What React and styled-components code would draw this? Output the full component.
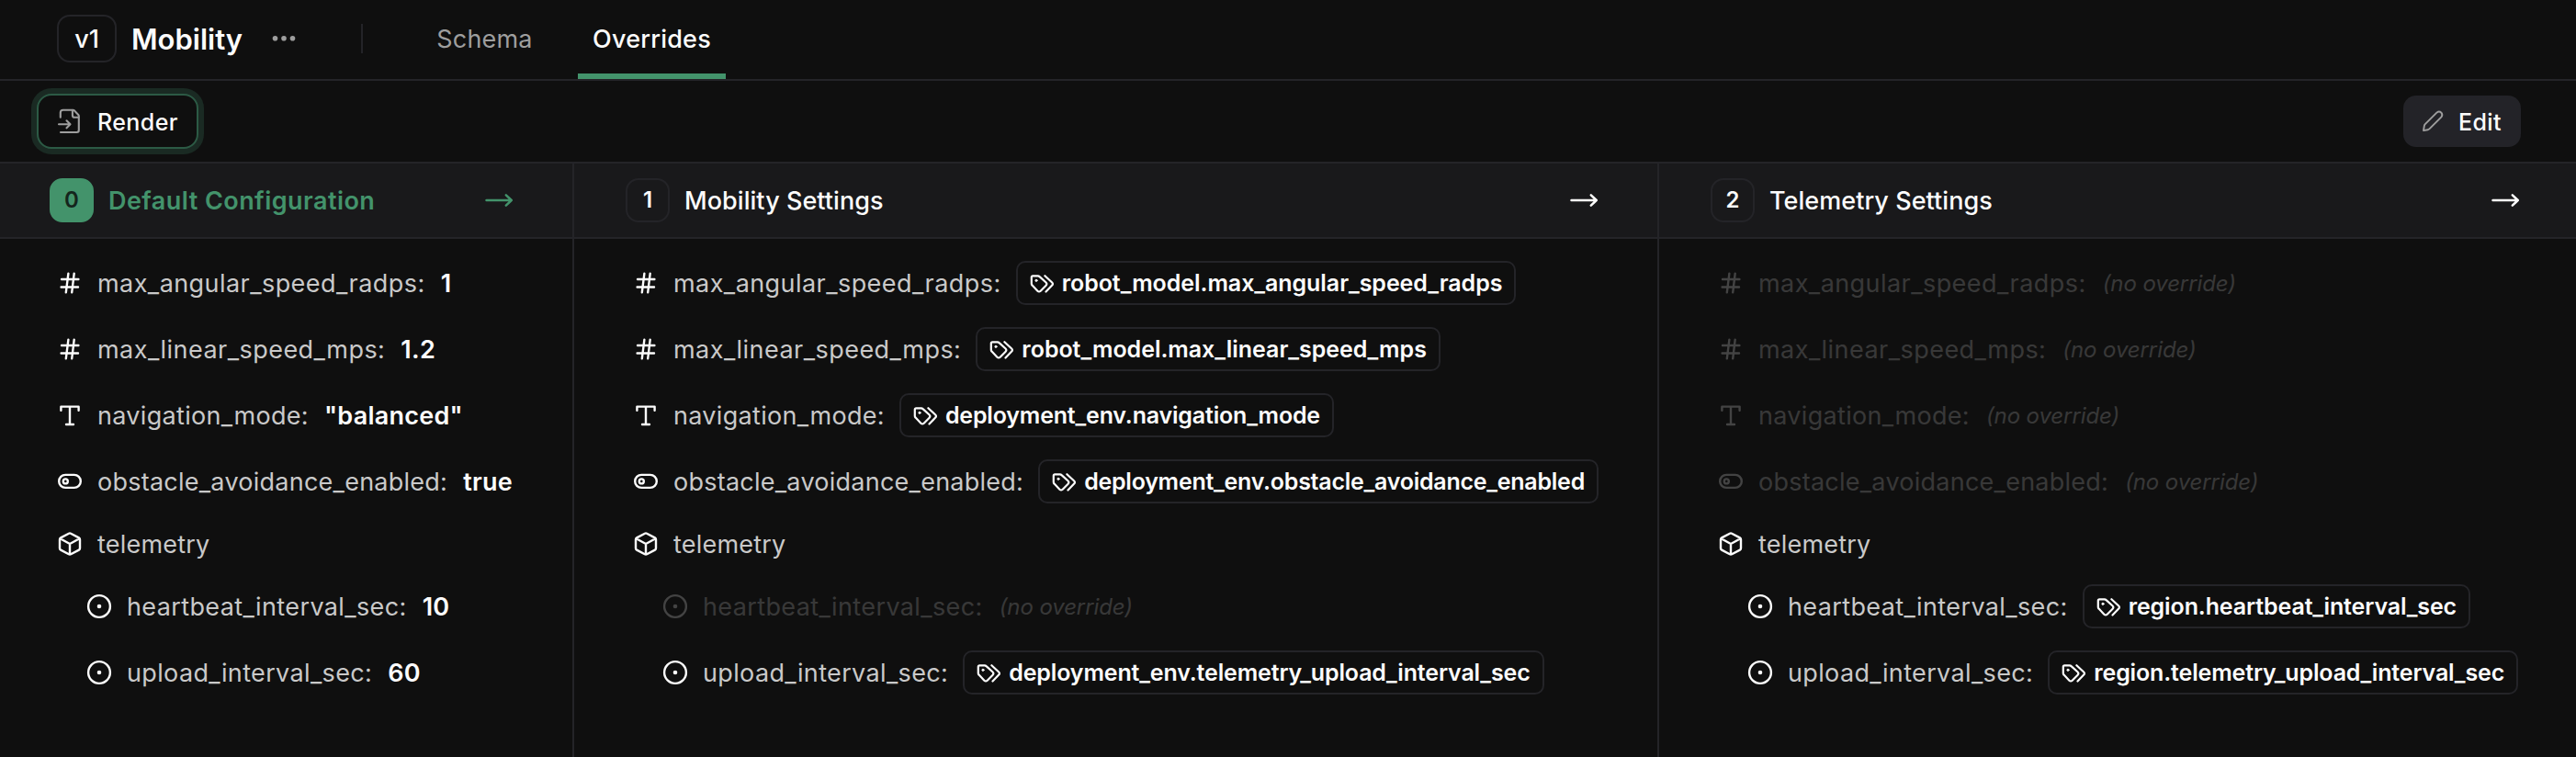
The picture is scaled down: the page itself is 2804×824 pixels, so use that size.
import React from "react";
import styled, { createGlobalStyle, css } from "styled-components";

const color = {
  bg: "#0f0f0f",
  band: "#19191b",
  line: "#242428",
  raised: "#232328",
  green: "#43936b",
  greenLine: "#2c5a45",
  greenHalo: "#1a2a23",
  text: "#fcfcfc",
  key: "#c9c9c9",
  muted: "#9e9e9e",
};

const GlobalStyle = createGlobalStyle`
  * { box-sizing: border-box; }
  body {
    margin: 0;
    background: ${color.bg};
    color: ${color.text};
    font-family: Inter, "Liberation Sans", sans-serif;
    font-size: 27px;
    line-height: 1;
    -webkit-font-smoothing: antialiased;
  }
`;

const Page = styled.div`
  display: flex;
  flex-direction: column;
  height: 824px;
  overflow: hidden;
`;

const Header = styled.header`
  display: flex;
  align-items: center;
  height: 88px;
  padding-left: 62px;
  border-bottom: 2px solid ${color.line};
`;

const VersionBadge = styled.span`
  display: flex;
  align-items: center;
  justify-content: center;
  width: 65px;
  height: 52px;
  margin-top: -2px;
  border: 2px solid ${color.line};
  border-radius: 14px;
  font-weight: 500;
`;

const Title = styled.h1`
  width: 123px;
  margin: -1px 0 0 16px;
  font-size: 31px;
  font-weight: 600;
  letter-spacing: 0;
  white-space: nowrap;
`;

const MenuButton = styled.span`
  display: flex;
  margin-left: 30px;
`;

const Divider = styled.span`
  width: 2px;
  height: 32px;
  margin: -2px 0 0 71px;
  background: ${color.line};
`;

const Tabs = styled.nav`
  display: flex;
  align-self: stretch;
  gap: 32px;
  margin-left: 63px;
`;

const Tab = styled.span`
  display: flex;
  align-items: center;
  justify-content: center;
  width: ${(p) => (p.$active ? "161px" : "139px")};
  padding-top: 5px;
  border-bottom: 6px solid ${(p) => (p.$active ? color.green : "transparent")};
  color: ${(p) => (p.$active ? color.text : color.muted)};
  font-weight: ${(p) => (p.$active ? 500 : 400)};
  letter-spacing: 0.2px;
`;

const Toolbar = styled.div`
  display: flex;
  align-items: center;
  justify-content: space-between;
  height: 90px;
  padding: 0 60px 0 40px;
  border-bottom: 2px solid ${color.line};
`;

const Button = styled.button`
  display: flex;
  align-items: center;
  margin: 0;
  border: 0;
  color: ${color.text};
  font: 500 25px Inter, "Liberation Sans", sans-serif;
  letter-spacing: 0.4px;
  ${(p) =>
    p.$outlined
      ? css`
          gap: 14px;
          width: 176px;
          height: 60px;
          padding: 0 0 0 18px;
          border: 2px solid ${color.greenLine};
          border-radius: 16px;
          background: ${color.bg};
          box-shadow: 0 0 0 6px ${color.greenHalo};
        `
      : css`
          gap: 12px;
          width: 128px;
          height: 56px;
          padding: 0 0 0 16px;
          border-radius: 14px;
          background: ${color.raised};
        `}
`;

const ButtonLabel = styled.span`
  padding-top: 2px;
`;

const Columns = styled.main`
  display: grid;
  grid-template-columns: 625px 1181px 1fr;
  flex: 1;
`;

const Column = styled.section`
  --start: ${(p) => (p.$first ? "54px" : "56px")};
  border-right: ${(p) => (p.$last ? "0" : `2px solid ${color.line}`)};
`;

const ColumnHeader = styled.header`
  display: flex;
  align-items: center;
  height: 82px;
  padding: 0 ${(p) => (p.$last ? "60px" : "63px")} 0 var(--start);
  border-bottom: 2px solid ${color.line};
  background: ${color.band};
  color: ${(p) => (p.$first ? color.green : color.text)};
`;

const Index = styled.span`
  display: flex;
  align-items: center;
  justify-content: center;
  width: 48px;
  height: 48px;
  border: 2px solid ${(p) => (p.$first ? color.green : color.line)};
  border-radius: 14px;
  background: ${(p) => (p.$first ? color.green : "transparent")};
  color: ${(p) => (p.$first ? "#14251c" : color.text)};
  font-size: 24px;
  font-weight: 600;
`;

const ColumnTitle = styled.h2`
  flex: 1;
  margin: 0 0 0 15px;
  padding: 1px 0 0 1px;
  font-size: 27px;
  font-weight: ${(p) => (p.$first ? 600 : 500)};
  letter-spacing: ${(p) => (p.$first ? "0.45px" : "0.05px")};
`;

const Rows = styled.div`
  display: flex;
  flex-direction: column;
  gap: 24px;
  padding: 24px 0 0 calc(var(--start) + 6px);
`;

const Row = styled.div`
  display: flex;
  align-items: center;
  height: ${(p) => (p.$group ? "40px" : "48px")};
  padding-left: ${(p) => (p.$nested ? "32px" : "0")};
  opacity: ${(p) => (p.$faded ? 0.22 : 1)};
  white-space: nowrap;
`;

const Key = styled.span`
  margin-left: 14px;
  padding-top: 1px;
  color: ${color.key};
  letter-spacing: ${(p) => p.$tracking}px;
`;

const Value = styled.span`
  margin-left: 17px;
  padding-top: 1px;
  font-weight: 600;
  letter-spacing: 0.25px;
`;

const Missing = styled.em`
  margin-left: 18px;
  padding-top: 1px;
  color: ${color.key};
  font-size: 24px;
  letter-spacing: -0.1px;
`;

const Chip = styled.span`
  display: flex;
  align-items: center;
  height: 48px;
  margin-left: 16px;
  padding: 1px 13px 0 12px;
  border: 2px solid ${color.line};
  border-radius: 10px;
  font-size: 25px;
  font-weight: 600;
  letter-spacing: ${(p) => p.$tracking}px;
  svg { margin-right: 8px; }
`;

const Glyph = styled.svg`
  flex: none;
  display: block;
  width: ${(p) => p.$size || 32}px;
  height: ${(p) => p.$size || 32}px;
  fill: none;
  stroke: ${(p) => p.$tone || "currentColor"};
  stroke-width: ${(p) => p.$weight || 2.4};
  stroke-linecap: round;
  stroke-linejoin: round;
`;

const Dots = () => (
  <svg width="26" height="8" viewBox="0 0 26 8" fill={color.muted}>
    <circle cx="3.5" cy="2.8" r="2.8" />
    <circle cx="13" cy="2.8" r="2.8" />
    <circle cx="22.5" cy="2.8" r="2.8" />
  </svg>
);

const FileInput = () => (
  <Glyph viewBox="0 0 32 32" $tone={color.muted} $weight={2.1}>
    <path d="M5.8 11.7V6.6q0-2.8 2.8-2.8H19.6q.7 0 1.2.5L25.3 8.9q.5.5.5 1.2V25.8q0 2.2-2.2 2.2H6" />
    <path d="M18.9 4.2V9.5q0 2.3 2.3 2.3h4.3M4 19.3h12.3M12.5 15.3l4 4-4 4" />
  </Glyph>
);

const Pencil = () => (
  <Glyph viewBox="0 0 32 32" $tone={color.muted} $weight={1.9}>
    <path d="M6 26.1l.8-5q.2-1.1 1-1.9L20.6 6.4q2.5-1.8 4.8.3 1.9 2.3 0 4.7L12.6 24.2q-.8.8-1.9 1z" />
  </Glyph>
);

const Arrow = () => (
  <Glyph viewBox="0 0 32 32" $weight={2.5}>
    <path d="M1.5 16H28.8M22.8 10.4l6 5.6-6 5.6" />
  </Glyph>
);

const Tags = () => (
  <Glyph viewBox="0 0 28 28" $size={28} $weight={2.2}>
    <path d="M2.8 6.8q0-1.5 1.5-1.5h5.5q1 0 1.8.8l7 6.4q1.6 1.6 0 3.2l-5.9 6q-1.7 1.5-3.3 0L3.6 15.6q-.8-.8-.8-1.9z" />
    <path d="M17.4 5.2l7.8 7.3q1.5 1.5 0 3.1l-6.7 6.9" />
    <circle cx="8" cy="10.3" r="1.1" fill="currentColor" strokeWidth="1" />
  </Glyph>
);

const glyphs = {
  number: (
    <Glyph viewBox="0 0 32 32">
      <path d="M7 12H25.4M6.6 20.5H25M14.4 5.6l-2.6 20.8M20.7 5.6l-2.5 20.8" />
    </Glyph>
  ),
  string: (
    <Glyph viewBox="0 0 32 32">
      <path d="M6.4 10.7V6.6H25.6V10.7M16 6.6V25.8M12 26H20" />
    </Glyph>
  ),
  boolean: (
    <Glyph viewBox="0 0 32 32">
      <rect x="4.2" y="8.9" width="23.6" height="14" rx="7" />
      <circle cx="11.3" cy="15.9" r="2.5" />
    </Glyph>
  ),
  object: (
    <Glyph viewBox="0 0 32 32">
      <path d="M14.9 4.7q1.1-.6 2.2 0l8.8 4.7q1.1.6 1.1 1.8v9.6q0 1.2-1.1 1.8l-8.8 4.7q-1.1.6-2.2 0l-8.8-4.7Q5 22 5 20.8v-9.6q0-1.2 1.1-1.8zM5.5 10.2L16 16l10.5-5.8M16 16v11.5" />
    </Glyph>
  ),
  decimal: (
    <Glyph viewBox="0 0 32 32">
      <circle cx="16" cy="16" r="11.9" />
      <circle cx="16" cy="16" r="2.3" fill="currentColor" stroke="none" />
    </Glyph>
  ),
};

const fields = [
  { key: "max_angular_speed_radps", type: "number", tracking: 0.44 },
  { key: "max_linear_speed_mps", type: "number", tracking: 0.46 },
  { key: "navigation_mode", type: "string", tracking: 0.32 },
  { key: "obstacle_avoidance_enabled", type: "boolean", tracking: 0.25 },
  { key: "telemetry", type: "object", tracking: 0.2 },
  { key: "heartbeat_interval_sec", type: "decimal", nested: true, tracking: 0.38 },
  { key: "upload_interval_sec", type: "decimal", nested: true, tracking: 0.36 },
];

const layers = [
  {
    title: "Default Configuration",
    values: {
      max_angular_speed_radps: "1",
      max_linear_speed_mps: "1.2",
      navigation_mode: '"balanced"',
      obstacle_avoidance_enabled: "true",
      heartbeat_interval_sec: "10",
      upload_interval_sec: "60",
    },
  },
  {
    title: "Mobility Settings",
    tags: {
      max_angular_speed_radps: "robot_model.max_angular_speed_radps",
      max_linear_speed_mps: "robot_model.max_linear_speed_mps",
      navigation_mode: "deployment_env.navigation_mode",
      obstacle_avoidance_enabled: "deployment_env.obstacle_avoidance_enabled",
      upload_interval_sec: "deployment_env.telemetry_upload_interval_sec",
    },
  },
  {
    title: "Telemetry Settings",
    tags: {
      heartbeat_interval_sec: "region.heartbeat_interval_sec",
      upload_interval_sec: "region.telemetry_upload_interval_sec",
    },
  },
];

function FieldRow({ field, layer }) {
  const group = field.type === "object";
  const value = layer.values?.[field.key];
  const tag = layer.tags?.[field.key];
  const missing = !group && !value && !tag;
  return (
    <Row $group={group} $nested={field.nested} $faded={missing}>
      {glyphs[field.type]}
      <Key $tracking={field.tracking}>{group ? field.key : `${field.key}:`}</Key>
      {value && <Value>{value}</Value>}
      {tag && (
        <Chip $tracking={field.tracking - 0.5}>
          <Tags />
          {tag}
        </Chip>
      )}
      {missing && <Missing>(no override)</Missing>}
    </Row>
  );
}

export default function App() {
  return (
    <Page>
      <GlobalStyle />
      <Header>
        <VersionBadge>v1</VersionBadge>
        <Title>Mobility</Title>
        <MenuButton>
          <Dots />
        </MenuButton>
        <Divider />
        <Tabs>
          <Tab>Schema</Tab>
          <Tab $active>Overrides</Tab>
        </Tabs>
      </Header>
      <Toolbar>
        <Button $outlined>
          <FileInput />
          <ButtonLabel>Render</ButtonLabel>
        </Button>
        <Button>
          <Pencil />
          <ButtonLabel>Edit</ButtonLabel>
        </Button>
      </Toolbar>
      <Columns>
        {layers.map((layer, i) => {
          const first = i === 0;
          const last = i === layers.length - 1;
          return (
            <Column key={layer.title} $first={first} $last={last}>
              <ColumnHeader $first={first} $last={last}>
                <Index $first={first}>{i}</Index>
                <ColumnTitle $first={first}>{layer.title}</ColumnTitle>
                <Arrow />
              </ColumnHeader>
              <Rows>
                {fields.map((field) => (
                  <FieldRow key={field.key} field={field} layer={layer} />
                ))}
              </Rows>
            </Column>
          );
        })}
      </Columns>
    </Page>
  );
}
